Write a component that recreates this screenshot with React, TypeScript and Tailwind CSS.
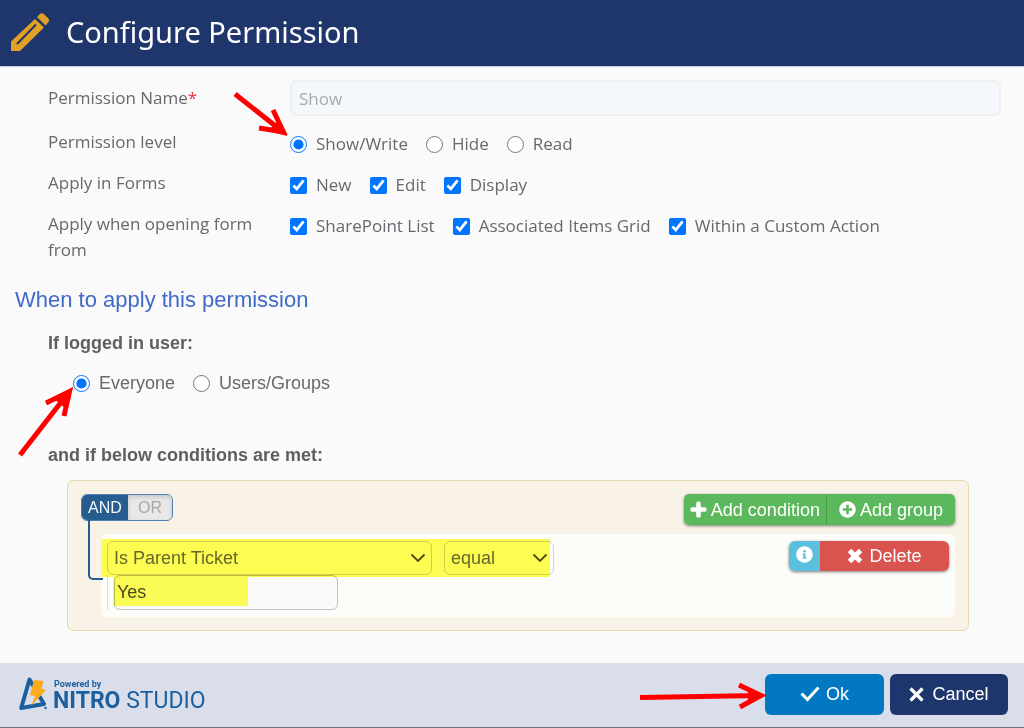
import { useState } from "react";
import type { InputHTMLAttributes, ReactNode } from "react";
import { FaInfoCircle, FaPlus, FaPlusCircle } from "react-icons/fa";

function PencilIcon() {
  return (
    <svg width="40" height="40" viewBox="0 0 40 40" fill="#e2a125" aria-hidden="true">
      <path d="M1 29.5 L25 7 L34 15.5 L10 39 H1 Z" />
      <path d="M27 5 L30 2 Q32 0.5 34 2.2 L38 6 Q40 8 38.5 10 L35.500 13.500 Z" />
      <path d="M7 32 L26 12.500" stroke="#1f366d" strokeWidth="2" fill="none" />
    </svg>
  );
}

function NitroMark() {
  return (
    <svg width="31" height="36" viewBox="0 0 31 36" aria-hidden="true">
      <path
        d="M11.500 3.500 L3.200 32 L26 28 Z"
        fill="none"
        stroke="#1c5f9e"
        strokeWidth="4"
        strokeLinejoin="round"
      />
      <path d="M16 4 L25.500 5 L23.500 12.500 L28 14 L13 30 L17 20 L12 19 Z" fill="#fbab1c" />
      <circle cx="27.500" cy="32" r="1.200" fill="#1c5f9e" />
    </svg>
  );
}

function Chevron() {
  return (
    <svg
      className="pointer-events-none absolute top-1/2 right-1.5 -translate-y-1/2"
      width="16"
      height="10"
      viewBox="0 0 16 10"
      fill="none"
      stroke="#4b4b4b"
      strokeWidth="1.800"
      aria-hidden="true"
    >
      <path d="M1.500 1.500 L8 8 L14.500 1.500" />
    </svg>
  );
}

type ChoiceProps = InputHTMLAttributes<HTMLInputElement> & { children: ReactNode };

function Choice({ children, ...input }: ChoiceProps) {
  return (
    <label className="flex items-center gap-[9px]">
      <input className="size-[17px] shrink-0 accent-[#0075ff]" {...input} />
      {children}
    </label>
  );
}

function FormRow({ label, children }: { label: ReactNode; children: ReactNode }) {
  return (
    <div role="group" className="grid grid-cols-[218px_1fr] items-start gap-x-6">
      <span>{label}</span>
      <div className="mt-0.5 flex flex-wrap gap-x-[18px]">{children}</div>
    </div>
  );
}

export default function App() {
  const [level, setLevel] = useState("Show/Write");
  const [audience, setAudience] = useState("Everyone");

  return (
    <div className="flex min-h-screen flex-col bg-[#fafafa] font-['Liberation_Sans',Arial,sans-serif] text-[18px] leading-[26px] text-[#66696d]">
      <header className="flex h-[67px] items-center gap-4 border-b border-[#c3c9d8] bg-[#1f366d] pb-0.5 pl-2.5 font-['Noto_Sans',sans-serif] text-white">
        <PencilIcon />
        <h1 className="text-[29px] leading-10">Configure Permission</h1>
      </header>

      <main className="flex-1 pt-[13px] pb-6">
        <section className="flex flex-col gap-[13px] pr-[23px] pl-12 font-['Open_Sans',sans-serif] text-[17px]">
          <div className="grid grid-cols-[218px_1fr] items-center gap-x-6">
            <label htmlFor="permission-name">
              Permission Name<span className="text-[#f0303c]">*</span>
            </label>
            <input
              id="permission-name"
              defaultValue="Show"
              className="h-9 w-full rounded-md border-2 border-[#eeefef] bg-[#f4f8fc] px-[7px] text-[#a9a9a9]"
            />
          </div>

          <FormRow label="Permission level">
            <div className="relative flex flex-wrap gap-x-[18px]">
              {["Show/Write", "Hide", "Read"].map((name) => (
                <Choice
                  key={name}
                  type="radio"
                  name="level"
                  checked={level === name}
                  onChange={() => setLevel(name)}
                >
                  {name}
                </Choice>
              ))}
              <svg
                className="pointer-events-none absolute -top-10 -left-[58px]"
                width="58"
                height="48"
                viewBox="0 0 58 48"
                fill="none"
                stroke="#ff0000"
                strokeWidth="5"
                aria-hidden="true"
              >
                <path d="M3 3 L51 41" />
                <path d="M41 19 L51.500 41 L27 37" />
                <path d="M55 45 L47 28 L36 40 Z" fill="#ff0000" stroke="none" />
              </svg>
            </div>
          </FormRow>

          <FormRow label="Apply in Forms">
            <Choice type="checkbox" defaultChecked>New</Choice>
            <Choice type="checkbox" defaultChecked>Edit</Choice>
            <Choice type="checkbox" defaultChecked>Display</Choice>
          </FormRow>

          <FormRow label="Apply when opening form from">
            <Choice type="checkbox" defaultChecked>SharePoint List</Choice>
            <Choice type="checkbox" defaultChecked>Associated Items Grid</Choice>
            <Choice type="checkbox" defaultChecked>Within a Custom Action</Choice>
          </FormRow>
        </section>

        <h2 className="mt-[23px] pl-[15px] text-[22px] leading-7 text-[#4169c8]">When to apply this permission</h2>

        <section className="pr-[55px] pl-12">
          <h3 className="mt-4 font-bold text-[#5c5f62]">If logged in user:</h3>
          <div className="relative mt-[14px] flex gap-x-[18px] pl-[25px]">
            {["Everyone", "Users/Groups"].map((name) => (
              <Choice
                key={name}
                type="radio"
                name="audience"
                checked={audience === name}
                onChange={() => setAudience(name)}
              >
                {name}
              </Choice>
            ))}
            <svg
              className="pointer-events-none absolute top-4 -left-[32px]"
              width="60"
              height="74"
              viewBox="0 0 60 74"
              fill="none"
              stroke="#ff0000"
              strokeWidth="5"
              aria-hidden="true"
            >
              <path d="M4 69 L53 6" />
              <path d="M30 17 L53.500 5.500 L48 30" />
              <path d="M57 1 L38 13 L49 22 Z" fill="#ff0000" stroke="none" />
            </svg>
          </div>

          <h3 className="mt-[46px] font-bold text-[#5c5f62]">and if below conditions are met:</h3>

          <div className="mt-3 ml-[19px] rounded-md border border-[#e8d9ae] bg-[#f9f3e7] p-[13px]">
            <div className="flex items-start justify-between">
              <div className="flex h-[27px] overflow-hidden rounded-md border border-[#4a80b4] text-base leading-[25px]">
                <button type="button" className="w-[46px] bg-[#275d8e] text-[#f4f8fc]">AND</button>
                <button type="button" className="w-11 bg-[#e8e8e8] text-[#a8a8a8] shadow-[inset_0_2px_4px_rgba(0,0,0,0.15)]">OR</button>
              </div>
              <div className="flex h-[31px] rounded-[5px] text-white shadow-[0_1px_3px_rgba(0,0,0,0.5)]">
                <button type="button" className="flex items-center gap-1 rounded-l-[5px] border-r border-[#4a9e4a] bg-[#5cb85c] px-[6px]">
                  <FaPlus className="size-[17px]" stroke="currentColor" strokeWidth="40" />
                  Add condition
                </button>
                <button type="button" className="flex items-center gap-1 rounded-r-[5px] bg-[#5cb85c] px-3">
                  <FaPlusCircle className="size-[17px]" />
                  Add group
                </button>
              </div>
            </div>

            <div className="relative mt-[9px] ml-5 rounded-md bg-[#fcfcf8] px-1.5 py-[7px]">
              <div className="pointer-events-none absolute -top-[14px] -left-[13px] h-[60px] w-[15px] rounded-bl-[5px] border-b-2 border-l-2 border-[#275d8e]" />
              <div className="flex items-start justify-between">
                <div className="flex gap-3">
                  <div className="relative w-[325px]">
                    <select aria-label="Field" className="h-[34px] w-full appearance-none rounded-md border border-[#d0d0d8] pl-1.5">
                      <option>Is Parent Ticket</option>
                    </select>
                    <Chevron />
                  </div>
                  <div className="relative w-[110px]">
                    <select aria-label="Operator" className="h-[34px] w-full appearance-none rounded-md border border-[#d0d0d8] pl-1.5">
                      <option>equal</option>
                    </select>
                    <Chevron />
                  </div>
                </div>
                <div className="flex h-[30px] rounded-md text-white shadow-[0_1px_3px_rgba(0,0,0,0.5)]">
                  <button type="button" aria-label="Info" className="flex w-[31px] justify-center rounded-l-md bg-[#5bc0de] pt-[5px]">
                    <FaInfoCircle className="size-[17px]" />
                  </button>
                  <button type="button" className="flex w-[129px] items-center justify-center gap-1.5 rounded-r-md bg-[#d9534f]">
                    <svg width="16" height="16" viewBox="0 0 16 16" fill="none" stroke="currentColor" strokeWidth="5" aria-hidden="true">
                      <path d="M2.500 2.500 L13.500 13.500 M13.500 2.500 L2.500 13.500" />
                    </svg>
                    Delete
                  </button>
                </div>
              </div>
              <div className="border-l border-[#dedede] pl-[6px]">
                <input
                  aria-label="Value"
                  defaultValue="Yes"
                  className="block h-[35px] w-[224px] rounded-md border border-[#bdbdc4] bg-[#fafafa] pl-0.5 text-[#4a4a4a]"
                />
              </div>
              <div className="pointer-events-none absolute top-[5px] left-0 h-[68px] w-[449px] mix-blend-multiply">
                <div className="h-[38px] bg-[#ffff55]" />
                <div className="ml-3 h-[29px] w-[135px] bg-[#ffff55]" />
              </div>
            </div>
          </div>
        </section>
      </main>

      <footer className="flex h-[65px] items-center justify-between border-b border-[#6f727c] bg-[#d9deea] pr-4 pb-0.5 pl-[18px]">
        <div className="flex items-center gap-1 font-[Roboto,sans-serif] text-[#1c5f9e]">
          <NitroMark />
          <div className="pt-1">
            <p className="pl-px text-[9px] leading-[10px] font-bold">Powered by</p>
            <p className="text-[23px] leading-6">
              <span className="font-bold">NITRO</span> <span>STUDIO</span>
            </p>
          </div>
        </div>
        <div className="relative flex gap-1.5 text-white">
          <svg
            className="pointer-events-none absolute top-2 -left-[126px]"
            width="128"
            height="28"
            viewBox="0 0 128 28"
            fill="none"
            stroke="#ff0000"
            strokeWidth="5"
            aria-hidden="true"
          >
            <path d="M1 15.500 L121 13.500" />
            <path d="M100 3 L122 13.500 L101 25" />
            <path d="M127 13.500 L109 5 L109 22 Z" fill="#ff0000" stroke="none" />
          </svg>
          <button type="button" className="flex h-[41px] w-[119px] items-center justify-center gap-1.5 rounded-md bg-[#0277c2]">
            <svg width="20" height="16" viewBox="0 0 20 16" fill="none" stroke="currentColor" strokeWidth="3" aria-hidden="true">
              <path d="M1.500 7.500 L7.500 13.500 L18.500 1.500" />
            </svg>
            Ok
          </button>
          <button type="button" className="flex h-[41px] w-[118px] items-center justify-center gap-2 rounded-md bg-[#1f366d]">
            <svg width="15" height="15" viewBox="0 0 15 15" fill="none" stroke="currentColor" strokeWidth="3.200" aria-hidden="true">
              <path d="M1.500 1.500 L13.500 13.500 M13.500 1.500 L1.500 13.500" />
            </svg>
            Cancel
          </button>
        </div>
      </footer>
    </div>
  );
}
